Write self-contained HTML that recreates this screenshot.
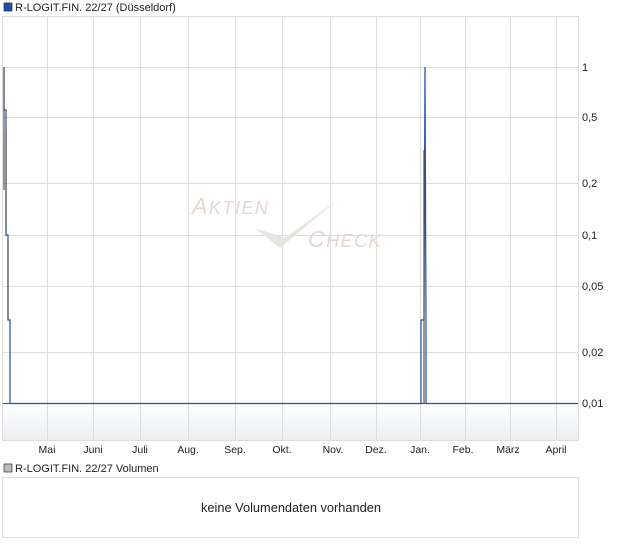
<!DOCTYPE html><html><head><style>body{margin:0;background:#fff;font-family:"Liberation Sans",sans-serif;}</style></head><body>
<svg width="620" height="546" xmlns="http://www.w3.org/2000/svg" font-family="Liberation Sans, sans-serif">
<rect x="4" y="3" width="8" height="8" fill="#1f4fa8" stroke="#333" stroke-width="0.7"/>
<text x="15" y="11" font-size="11" fill="#222">R-LOGIT.FIN. 22/27 (Düsseldorf)</text>
<rect x="2.5" y="16.5" width="576" height="424" fill="#fff" stroke="#ddd"/>
<defs><linearGradient id="g" x1="0" y1="0" x2="0" y2="1"><stop offset="0" stop-color="#fff"/><stop offset="1" stop-color="#eceef1"/></linearGradient></defs>
<rect x="3" y="404" width="575" height="36" fill="url(#g)"/>
<g stroke="#ddd" stroke-width="1">
<path d="M47.5 17V440M93.5 17V440M140.5 17V440M188.5 17V440M235.5 17V440M282.5 17V440M330.5 17V440M376.5 17V440M420.5 17V440M465.5 17V440M510.5 17V440M556.5 17V440"/>
<path d="M3 67.5H578M3 117.5H578M3 183.5H578M3 235.5H578M3 286.5H578M3 352.5H578"/>
</g>
<text x="192" y="214" font-size="23" fill="#e6d8d0" font-style="italic" letter-spacing="1.5">A<tspan font-size="18">KTIEN</tspan></text>
<text x="308" y="247" font-size="23" fill="#e6d8d0" font-style="italic" letter-spacing="1.5">C<tspan font-size="18">HECK</tspan></text>
<path d="M255 228 L280 248 L340 198 L285 238 Z" fill="#e8e4e0"/>
<g fill="none" stroke-width="1.2">
<path d="M4 67V110L6 110V235L8 235V320L10 320V403.5H421V320L424 320L425 67L426 320V403.5H578" stroke="#1f4fa8"/>
<path d="M4 67V190M6 130V235M8 240V320M424 150V403" stroke="#555"/>
</g>
<path d="M3 403.5H578" stroke="#1f4fa8"/>
<g font-size="11" fill="#222">
<text x="582" y="71">1</text><text x="582" y="121">0,5</text><text x="582" y="187">0,2</text><text x="582" y="239">0,1</text><text x="582" y="290">0,05</text><text x="582" y="356">0,02</text><text x="582" y="407">0,01</text>
</g>
<g font-size="10.5" fill="#222" text-anchor="middle">
<text x="47" y="453">Mai</text><text x="93" y="453">Juni</text><text x="140" y="453">Juli</text><text x="188" y="453">Aug.</text><text x="235" y="453">Sep.</text><text x="282" y="453">Okt.</text><text x="333" y="453">Nov.</text><text x="376" y="453">Dez.</text><text x="420" y="453">Jan.</text><text x="463" y="453">Feb.</text><text x="508" y="453">März</text><text x="556" y="453">April</text>
</g>
<rect x="4" y="464" width="8" height="8" fill="#bbb" stroke="#333" stroke-width="0.7"/>
<text x="15" y="472" font-size="11" fill="#222">R-LOGIT.FIN. 22/27 Volumen</text>
<rect x="2.5" y="477.5" width="576" height="60" fill="#fff" stroke="#ddd"/>
<text x="291" y="512" font-size="12.8" fill="#222" text-anchor="middle">keine Volumendaten vorhanden</text>
</svg>
</body></html>
